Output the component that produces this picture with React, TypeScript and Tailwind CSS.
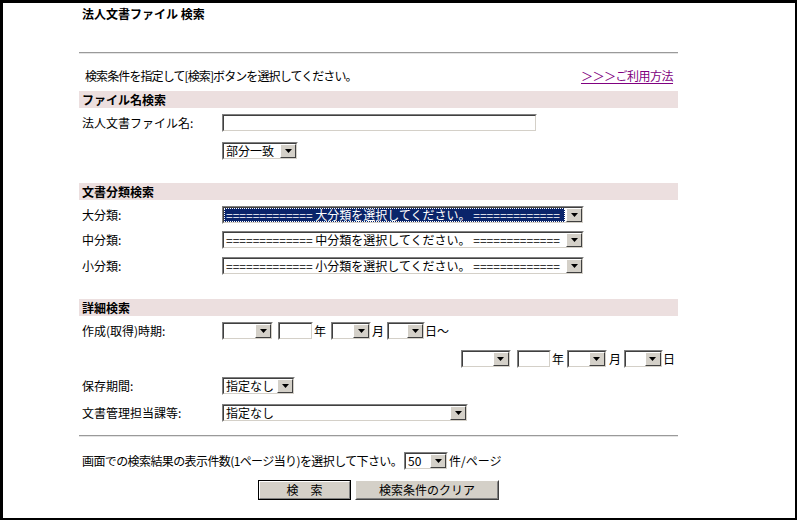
import React from "react";

const FONT = { fontFamily: '"Noto Sans CJK JP", "Noto Sans", sans-serif' };

function Arrow() {
  return (
    <div className="flex w-[16px] shrink-0 items-center justify-center border border-t-[#ffffff] border-l-[#ffffff] border-r-[#404040] border-b-[#404040] bg-[#d4d0c8]">
      <svg width="7" height="4" viewBox="0 0 7 4">
        <path d="M0 0H7L3.5 4Z" fill="#000" />
      </svg>
    </div>
  );
}

function Sel({ className, text, selected }: { className: string; text?: string; selected?: boolean }) {
  return (
    <div className={`flex h-[18px] shrink-0 border border-t-[#808080] border-l-[#808080] border-r-[#ffffff] border-b-[#ffffff] ${className}`}>
      <div className="flex min-w-0 flex-1 border border-t-[#404040] border-l-[#404040] border-r-[#d4d0c8] border-b-[#d4d0c8] bg-white">
        <div className="flex min-w-0 flex-1 items-stretch">
          <div
            className={`flex min-w-0 flex-1 items-center whitespace-nowrap px-[2px] text-[12px] leading-[14px] ${
              selected ? "mr-[1px] bg-[#0a246a] text-white outline outline-1 outline-dotted outline-[#ffffff] -outline-offset-1" : "text-black"
            }`}
          >
            {text}
          </div>
        </div>
        <Arrow />
      </div>
    </div>
  );
}

function TextBox({ className }: { className: string }) {
  return (
    <div className={`h-[18px] shrink-0 border border-t-[#808080] border-l-[#808080] border-r-[#ffffff] border-b-[#ffffff] ${className}`}>
      <div className="h-full border border-t-[#404040] border-l-[#404040] border-r-[#d4d0c8] border-b-[#d4d0c8] bg-white" />
    </div>
  );
}

function Header({ children, className }: { children: React.ReactNode; className: string }) {
  return (
    <div className={`flex h-[17px] items-center bg-[#ecdfdf] pl-[3px] text-[12px] font-bold leading-none ${className}`}>
      {children}
    </div>
  );
}

function Row({ label, children, className }: { label: string; children: React.ReactNode; className: string }) {
  return (
    <div className={`flex items-center ${className}`}>
      <div className="w-[143px] shrink-0 pl-[3px] text-[12px] leading-none">{label}</div>
      {children}
    </div>
  );
}

const EQ = "=============";

export default function App() {
  return (
    <div className="h-[520px] w-[797px] bg-black pt-[3px] pl-[3px] pr-[2px] pb-[2px]" style={FONT}>
      <div className="h-full w-full overflow-hidden bg-white">
        <div className="ml-[76px] w-[599px] text-black">
          <div className="mt-[3px] flex h-[16px] items-center pl-[3px] text-[12px] font-bold leading-none">法人文書ファイル 検索</div>

          <div className="mt-[30px] h-[2px] border-t border-b border-t-[#9a9a9a] border-b-[#e4e4e4]" />

          <div className="mt-[14px] flex h-[16px] items-center justify-between pl-[6px] pr-[5px] text-[12px] leading-none">
            <span className="tracking-[-0.9px]">検索条件を指定して[検索]ボタンを選択してください。</span>
            <a href="#" className="text-[#800080] underline underline-offset-2 tracking-[-0.5px]">＞＞＞ご利用方法</a>
          </div>

          <Header className="mt-[7px]">ファイル名検索</Header>
          <Row label="法人文書ファイル名:" className="mt-[6px]">
            <TextBox className="w-[315px]" />
          </Row>
          <div className="mt-[10px] flex pl-[143px]">
            <Sel className="w-[76px]" text="部分一致" />
          </div>

          <Header className="mt-[23px]">文書分類検索</Header>
          <Row label="大分類:" className="mt-[6px]">
            <Sel className="w-[362px]" text={`${EQ} 大分類を選択してください。 ${EQ}`} selected />
          </Row>
          <Row label="中分類:" className="mt-[7px]">
            <Sel className="w-[362px]" text={`${EQ} 中分類を選択してください。 ${EQ}`} />
          </Row>
          <Row label="小分類:" className="mt-[8px]">
            <Sel className="w-[362px]" text={`${EQ} 小分類を選択してください。 ${EQ}`} />
          </Row>

          <Header className="mt-[24px]">詳細検索</Header>
          <Row label="作成(取得)時期:" className="mt-[6px]">
            <div className="flex items-center text-[12px] leading-none">
              <Sel className="w-[51px]" />
              <TextBox className="ml-[5px] w-[35px]" />
              <span className="mx-[1px]">年</span>
              <Sel className="ml-[4px] w-[40px]" />
              <span className="mx-[1px]">月</span>
              <Sel className="ml-[2px] w-[38px]" />
              <span>日～</span>
            </div>
          </Row>
          <div className="mt-[10px] flex items-center justify-end pr-[3px] text-[12px] leading-none">
            <Sel className="w-[50px]" />
            <TextBox className="ml-[6px] w-[34px]" />
            <span className="mx-[1px]">年</span>
            <Sel className="ml-[2px] w-[40px]" />
            <span className="mx-[2px]">月</span>
            <Sel className="ml-[1px] w-[39px]" />
            <span>日</span>
          </div>
          <Row label="保存期間:" className="mt-[9px]">
            <Sel className="w-[73px]" text="指定なし" />
          </Row>
          <Row label="文書管理担当課等:" className="mt-[9px]">
            <Sel className="w-[246px]" text="指定なし" />
          </Row>

          <div className="mt-[13px] h-[2px] border-t border-b border-t-[#9a9a9a] border-b-[#e4e4e4]" />

          <div className="mt-[15px] flex items-center pl-[3px] text-[12px] leading-none">
            <span className="w-[319px] shrink-0 whitespace-nowrap tracking-[-0.6px]">画面での検索結果の表示件数(1ページ当り)を選択して下さい。</span>
            <Sel className="ml-[3px] w-[44px]" text="50" />
            <span className="ml-[1px]">件/ページ</span>
          </div>

          <div className="mt-[10px] flex justify-center gap-[4px]">
            <button className="h-[20px] w-[93px] border border-black bg-[#d4d0c8] p-0">
              <div className="flex h-full items-center justify-center border border-t-[#ffffff] border-l-[#ffffff] border-r-[#808080] border-b-[#808080] text-[12px] leading-none">
                検　索
              </div>
            </button>
            <button className="h-[20px] w-[144px] border border-t-[#ffffff] border-l-[#ffffff] border-r-[#404040] border-b-[#404040] bg-[#d4d0c8] p-0">
              <div className="flex h-full items-center justify-center border border-t-[#d4d0c8] border-l-[#d4d0c8] border-r-[#808080] border-b-[#808080] text-[12px] leading-none">
                検索条件のクリア
              </div>
            </button>
          </div>
        </div>
      </div>
    </div>
  );
}
